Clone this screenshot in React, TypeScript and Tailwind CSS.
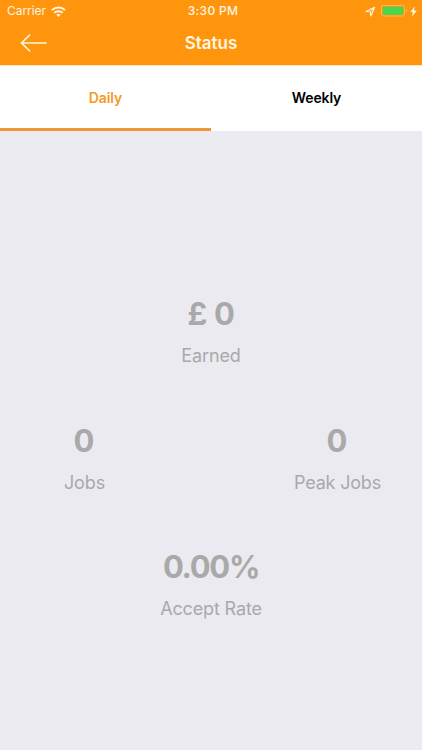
import { useState } from "react";
import clsx from "clsx";

type Tab = "Daily" | "Weekly";

interface StatProps {
    value: string;
    label: string;
    valueClass?: string;
    labelClass?: string;
}

const tabs: Tab[] = ["Daily", "Weekly"];

function Stat({ value, label, valueClass, labelClass }: StatProps) {
    return (
        <div className="flex flex-col items-center whitespace-nowrap text-[#a9a9a9]">
            <span className={clsx("text-[31px] leading-9 font-bold", valueClass)}>{value}</span>
            <span className={clsx("mt-3 text-[18px] leading-6", labelClass)}>{label}</span>
        </div>
    );
}

function StatusBar() {
    return (
        <div className="grid h-[22px] grid-cols-3 items-center pl-[7px] pr-[5px] text-[#fff6e0]">
            <div className="flex items-center gap-[5px]">
                <span className="text-[12px] leading-none tracking-[-0.05px]">Carrier</span>
                <svg width="15" height="11" viewBox="0 0 15 11" fill="none" stroke="currentColor" strokeWidth="2">
                    <path d="M0.9 4.1a9.4 9.4 0 0 1 13.2 0" />
                    <path d="M3.3 6.9a6 6 0 0 1 8.4 0" />
                    <path d="M7.5 11L5.3 8.8a3.1 3.1 0 0 1 4.4 0z" fill="currentColor" stroke="none" />
                </svg>
            </div>
            <span className="pl-[2px] text-center text-[12px] leading-none font-medium tracking-[0.3px]">3:30 PM</span>
            <div className="flex items-center justify-end">
                <svg className="mr-[5px]" width="11" height="11" viewBox="0 0 11 11" fill="none" stroke="currentColor">
                    <path d="M9.7 1.2L1 5.4l4.3.4.5 4.2z" strokeWidth="1.1" strokeLinejoin="round" />
                    <path d="M9.7 1.2L5.3 5.8" strokeWidth="0.8" />
                </svg>
                <svg width="27" height="12" viewBox="0 0 27 12">
                    <rect x="0.5" y="0.5" width="23" height="10.5" rx="2" fill="none" stroke="#ffb84f" />
                    <rect x="1.8" y="1.8" width="20.4" height="7.9" rx="0.7" fill="#48d64e" />
                    <path d="M25 4v3.5q1.4-.4 1.4-1.75T25 4z" fill="#ffc064" />
                </svg>
                <svg className="ml-[2px]" width="7" height="11" viewBox="0 0 7 11" fill="currentColor">
                    <path d="M4.9 0.2L0.3 6h2.5L2 10.8 6.8 4.6H4z" />
                </svg>
            </div>
        </div>
    );
}

export default function App() {
    const [active, setActive] = useState<Tab>("Daily");

    return (
        <div className="flex h-[750px] w-[422px] flex-col overflow-hidden bg-[#ebeaf0] font-['Inter',sans-serif]">
            <header className="h-[65px] shrink-0 bg-[#ff950d]">
                <StatusBar />
                <div className="grid h-[42px] grid-cols-3 items-center text-[#fff6e0]">
                    <button aria-label="Back" className="ml-5 w-7">
                        <svg width="28" height="20" viewBox="0 0 28 20" fill="none" stroke="currentColor" strokeWidth="1.6">
                            <path d="M10.2 1.5L1.5 10l8.7 8.5M1.5 10H26.5" />
                        </svg>
                    </button>
                    <h1 className="pt-px text-center text-[17px] leading-none font-semibold tracking-[-0.05px]">Status</h1>
                </div>
            </header>

            <nav className="flex h-[66px] shrink-0 border-t border-[#ffe6bc] bg-white">
                {tabs.map((tab) => (
                    <button
                        key={tab}
                        onClick={() => setActive(tab)}
                        className={clsx(
                            "flex-1 border-b-[3px] text-[14px] font-semibold tracking-[-0.1px]",
                            active === tab ? "border-[#ef9638] text-[#f39a26]" : "border-transparent text-black"
                        )}
                    >
                        {tab}
                    </button>
                ))}
            </nav>

            <main className="flex flex-col gap-[54.5px] pt-[165px]">
                <Stat value="£ 0" label="Earned" valueClass="tracking-[-0.4px]" labelClass="tracking-[-0.1px]" />
                <div className="grid grid-cols-[169px_1fr_169px]">
                    <Stat value="0" label="Jobs" valueClass="pr-px" labelClass="tracking-[-0.1px]" />
                    <div />
                    <Stat value="0" label="Peak Jobs" valueClass="pr-px" labelClass="tracking-[-0.2px]" />
                </div>
                <Stat value="0.00%" label="Accept Rate" valueClass="tracking-[-1.3px]" labelClass="tracking-[-0.15px]" />
            </main>
        </div>
    );
}
